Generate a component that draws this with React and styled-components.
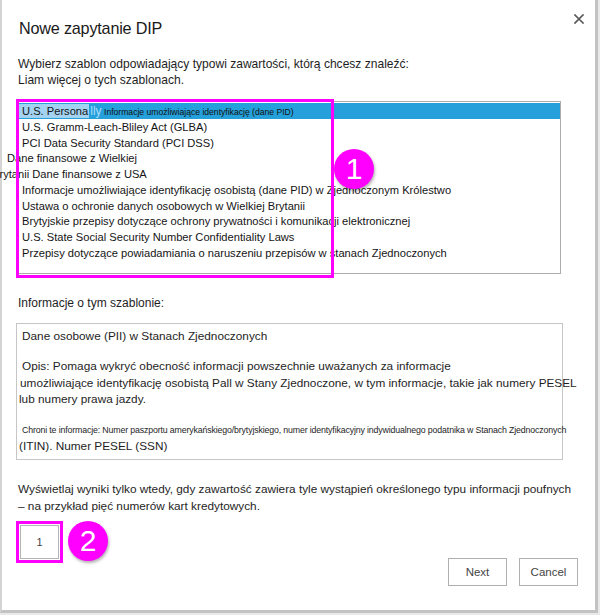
import React from 'react'
import styled, { createGlobalStyle } from 'styled-components'

const GlobalStyle = createGlobalStyle`
  * { box-sizing: border-box; }
  body {
    margin: 0;
    background: #e9e9e9;
    font-family: "Liberation Sans", Arial, sans-serif;
    color: #1e1e1e;
  }
`

const templates = [
  { id: 'us-pii', selected: true },
  { id: 'glba', label: 'U.S. Gramm-Leach-Bliley Act (GLBA)' },
  { id: 'pci', label: 'PCI Data Security Standard (PCI DSS)' },
  { id: 'uk-fin', label: 'Dane finansowe z Wielkiej', shift: -15 },
  { id: 'us-fin', label: 'Brytanii Dane finansowe z USA', shift: -30 },
  { id: 'uk-pii', label: 'Informacje umożliwiające identyfikację osobistą (dane PID) w Zjednoczonym Królestwo' },
  { id: 'uk-dpa', label: 'Ustawa o ochronie danych osobowych w Wielkiej Brytanii' },
  { id: 'uk-pecr', label: 'Brytyjskie przepisy dotyczące ochrony prywatności i komunikacji elektronicznej' },
  { id: 'us-ssn', label: 'U.S. State Social Security Number Confidentiality Laws' },
  { id: 'us-breach', label: 'Przepisy dotyczące powiadamiania o naruszeniu przepisów w stanach Zjednoczonych' },
]

function CloseIcon() {
  return (
    <svg width='10' height='10' viewBox='0 0 10 10'>
      <path d='M1 1 L9 9 M9 1 L1 9' stroke='#5a5a5a' strokeWidth='1.7' strokeLinecap='square' />
    </svg>
  )
}

export default function App() {
  return (
    <>
      <GlobalStyle />
      <Dialog>
        <Header>
          <Title>Nowe zapytanie DIP</Title>
          <CloseButton aria-label='Zamknij'>
            <CloseIcon />
          </CloseButton>
        </Header>
        <Body>
          <Intro>
            <Line>Wybierz szablon odpowiadający typowi zawartości, którą chcesz znaleźć:</Line>
            <Line>Liam więcej o tych szablonach.</Line>
          </Intro>

          <ListWrap>
            <ListBox>
              {templates.map((t) =>
                t.selected ? (
                  <Row key={t.id} $selected>
                    <Picked>U.S. Persona</Picked>
                    <Ghost>lly</Ghost>
                    <Tiny> Informacje umożliwiające identyfikację (dane PID)</Tiny>
                  </Row>
                ) : (
                  <Row key={t.id} $shift={t.shift || 0}>
                    {t.label}
                  </Row>
                )
              )}
            </ListBox>
            <ListMark />
            <ListBadge>1</ListBadge>
          </ListWrap>

          <Label>Informacje o tym szablonie:</Label>
          <InfoBox>
            <Line>Dane osobowe (PII) w Stanach Zjednoczonych</Line>
            <Para>
              <Line>Opis: Pomaga wykryć obecność informacji powszechnie uważanych za informacje</Line>
              <Line $indent={-2}>umożliwiające identyfikację osobistą Pall w Stany Zjednoczone, w tym informacje, takie jak numery PESEL</Line>
              <Line $indent={-3}>lub numery prawa jazdy.</Line>
            </Para>
            <Para $gap={14}>
              <Line $small>Chroni te informacje: Numer paszportu amerykańskiego/brytyjskiego, numer identyfikacyjny indywidualnego podatnika w Stanach Zjednoczonych</Line>
              <Line $indent={-3}>(ITIN). Numer PESEL (SSN)</Line>
            </Para>
          </InfoBox>

          <Notice>
            <Line>Wyświetlaj wyniki tylko wtedy, gdy zawartość zawiera tyle wystąpień określonego typu informacji poufnych</Line>
            <Line>– na przykład pięć numerów kart kredytowych.</Line>
          </Notice>

          <BottomRow>
            <CountGroup>
              <CountMark>
                <CountInput defaultValue='1' />
              </CountMark>
              <Badge>2</Badge>
            </CountGroup>
            <Buttons>
              <Button>Next</Button>
              <Button>Cancel</Button>
            </Buttons>
          </BottomRow>
        </Body>
      </Dialog>
    </>
  )
}

const Dialog = styled.div`
  width: 598px;
  height: 613px;
  background: #fff;
  border-left: 2px solid #d4d4d4;
  border-right: 3px solid #c3c3c3;
  border-bottom: 3px solid #c3c3c3;
  display: flex;
  flex-direction: column;
`
const Header = styled.div`
  display: flex;
  justify-content: space-between;
  align-items: flex-start;
  padding: 14px 11px 0 17px;
`
const Title = styled.h1`
  margin: 4px 0 0;
  font-size: 16.2px;
  line-height: 20px;
  font-weight: normal;
  color: #1a1a1a;
  letter-spacing: -0.2px;
`
const CloseButton = styled.button`
  display: flex;
  padding: 0;
  border: none;
  background: none;
  width: 10px;
  height: 10px;
`
const Body = styled.div`
  display: flex;
  flex-direction: column;
  padding: 0 17px 0 14px;
`
const Line = styled.div`
  white-space: nowrap;
  margin-left: ${(p) => p.$indent || 0}px;
  font-size: ${(p) => (p.$small ? '8.8px' : 'inherit')};
  letter-spacing: ${(p) => (p.$small ? '-0.15px' : 'inherit')};
`
const Intro = styled.div`
  margin-top: 18px;
  margin-left: 2px;
  font-size: 12.05px;
  line-height: 16px;
`
const ListWrap = styled.div`
  position: relative;
  margin-top: 13px;
  width: 545px;
`
const ListBox = styled.div`
  height: 173px;
  border: 1px solid #acacac;
  padding: 1px 0 0;
  background: #fff;
`
const Row = styled.div`
  height: 15.75px;
  line-height: 16.5px;
  font-size: 11.15px;
  white-space: nowrap;
  padding-left: ${(p) => (p.$selected ? 2 : 5)}px;
  margin-left: ${(p) => p.$shift || 0}px;
  background: ${(p) => (p.$selected ? '#26a0da' : 'transparent')};
  color: #151515;
`
const Picked = styled.span`
  background: #a3d3f1;
  padding: 1px 1px 1px 3px;
`
const Ghost = styled.span`
  color: #a9dcfb;
  padding-left: 1px;
  font-size: 12px;
`
const Tiny = styled.span`
  font-size: 8.6px;
  color: #111;
`
const ListMark = styled.div`
  position: absolute;
  left: 0;
  top: -2px;
  width: 318px;
  height: 179px;
  border: 3px solid #f0f;
  pointer-events: none;
`
const Badge = styled.div`
  width: 40px;
  height: 40px;
  border-radius: 50%;
  background: #f0f;
  color: #fff;
  font-size: 30px;
  line-height: 40px;
  text-align: center;
  box-shadow: 1px 2px 3px rgba(0, 0, 0, 0.3);
`
const ListBadge = styled(Badge)`
  position: absolute;
  left: 318px;
  top: 48px;
`
const Label = styled.div`
  margin: 21px 0 0 2px;
  font-size: 12px;
  line-height: 16px;
`
const InfoBox = styled.div`
  margin-top: 12px;
  width: 547px;
  height: 137px;
  border: 1px solid #c6c6c6;
  padding: 4px 0 0 5px;
  font-size: 11.8px;
  line-height: 16px;
`
const Para = styled.div`
  margin-top: ${(p) => p.$gap || 14}px;
  line-height: ${(p) => (p.$gap ? 16 : 16.5)}px;
`
const Notice = styled.div`
  margin: 21px 0 0 2px;
  font-size: 11.8px;
  line-height: 17px;
`
const BottomRow = styled.div`
  display: flex;
  justify-content: space-between;
  align-items: flex-start;
  margin-top: 6px;
`
const CountGroup = styled.div`
  display: flex;
  align-items: flex-start;
  gap: 5px;
`
const CountMark = styled.div`
  border: 3px solid #f0f;
  padding: 1px;
`
const CountInput = styled.input`
  display: block;
  width: 39px;
  height: 34px;
  border: 1px solid #b4b4b4;
  text-align: center;
  font-family: inherit;
  font-size: 11px;
  color: #444;
  outline: none;
`
const Buttons = styled.div`
  display: flex;
  gap: 12px;
  margin-top: 37px;
`
const Button = styled.button`
  height: 28px;
  min-width: 59px;
  padding: 0 10px;
  border: 1px solid #b0b0b0;
  background: #fff;
  font-family: inherit;
  font-size: 11.5px;
  color: #444;
`
